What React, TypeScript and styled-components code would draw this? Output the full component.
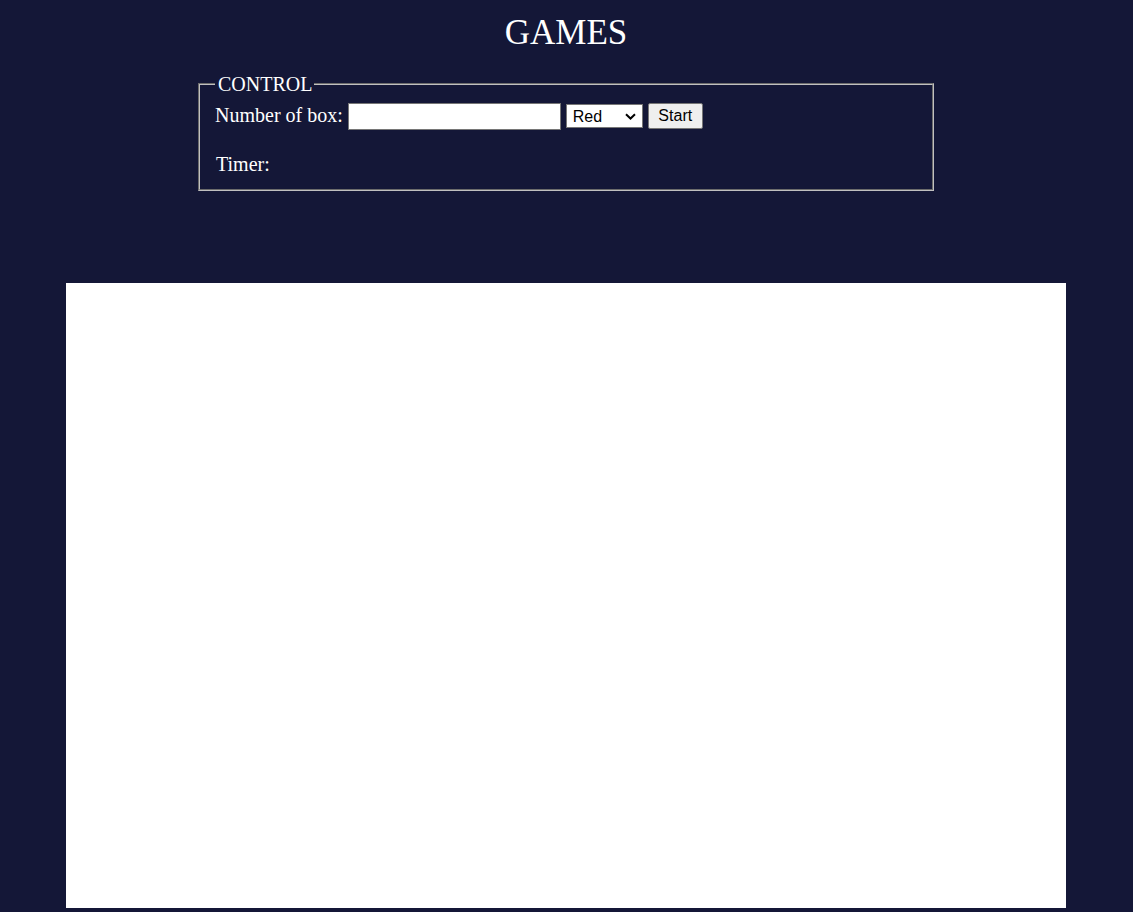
import React from "react";
import styled, { createGlobalStyle } from "styled-components";

const GlobalStyle = createGlobalStyle`
  html, body {
    margin: 0;
    padding: 0;
    background: #141737;
  }
  body {
    font-family: "Liberation Serif", "Times New Roman", serif;
    color: #ffffff;
  }
`;

const Page = styled.div`
  display: flex;
  flex-direction: column;
  align-items: center;
  padding: 13px 1px 40px 0;
`;

const Title = styled.h1`
  margin: 0;
  font-size: 35px;
  font-weight: 400;
  line-height: 40px;
  text-align: center;
`;

const Control = styled.fieldset`
  box-sizing: border-box;
  width: 736px;
  margin: 19px 0 0;
  padding: 7px 14px 13px 15px;
  border: 2px groove #c0c0c0;
  font-size: 20px;
  display: flex;
  flex-direction: column;
`;

const Legend = styled.legend`
  padding: 0 2px 0 3px;
  font-size: 20px;
  line-height: 23px;
  transform: translateY(1px);
`;

const Row = styled.div`
  display: flex;
  align-items: flex-start;
  gap: 5px;
`;

const Label = styled.span`
  margin-top: 2px;
  line-height: 23px;
  font-size: 20px;
`;

const NumberInput = styled.input`
  box-sizing: border-box;
  width: 213px;
  height: 27px;
  margin-top: 1px;
  padding: 1px 2px;
  border: 1px solid #767676;
  border-radius: 0;
  background: #ffffff;
  font-family: "Liberation Sans", Arial, sans-serif;
  font-size: 16px;
  outline: none;
`;

const chevron =
  "data:image/svg+xml;utf8," +
  encodeURIComponent(
    '<svg xmlns="http://www.w3.org/2000/svg" width="11" height="7" viewBox="0 0 11 7"><path d="M1 1.2l4.5 4.3 4.5-4.3" fill="none" stroke="black" stroke-width="2"/></svg>'
  );

const ColorSelect = styled.select`
  box-sizing: border-box;
  appearance: none;
  -webkit-appearance: none;
  width: 77px;
  height: 24px;
  margin-top: 2px;
  padding: 0 20px 0 6px;
  border: 1px solid #767676;
  border-radius: 0;
  background: #ffffff url("${chevron}") no-repeat right 6px center / 11px 7px;
  color: #000000;
  font-family: "Liberation Sans", Arial, sans-serif;
  font-size: 16px;
`;

const StartButton = styled.button`
  box-sizing: border-box;
  width: 55px;
  height: 26px;
  margin-top: 1px;
  padding: 1px 6px;
  border: 1px solid #767676;
  border-radius: 2px;
  background: #efefef;
  color: #000000;
  font-family: "Liberation Sans", Arial, sans-serif;
  font-size: 16px;
  line-height: 18px;
`;

const Timer = styled.div`
  margin-top: 23px;
  padding-left: 1px;
  font-size: 20px;
  line-height: 23px;
`;

const Board = styled.div`
  width: 1000px;
  height: 625px;
  margin-top: 92px;
  background: #ffffff;
`;

export default function App() {
  return (
    <>
      <GlobalStyle />
      <Page>
        <Title>GAMES</Title>
        <Control>
          <Legend>CONTROL</Legend>
          <Row>
            <Label>Number of box:</Label>
            <NumberInput type="text" />
            <ColorSelect defaultValue="red">
              <option value="red">Red</option>
              <option value="green">Green</option>
              <option value="blue">Blue</option>
            </ColorSelect>
            <StartButton>Start</StartButton>
          </Row>
          <Timer>Timer:</Timer>
        </Control>
        <Board />
      </Page>
    </>
  );
}
